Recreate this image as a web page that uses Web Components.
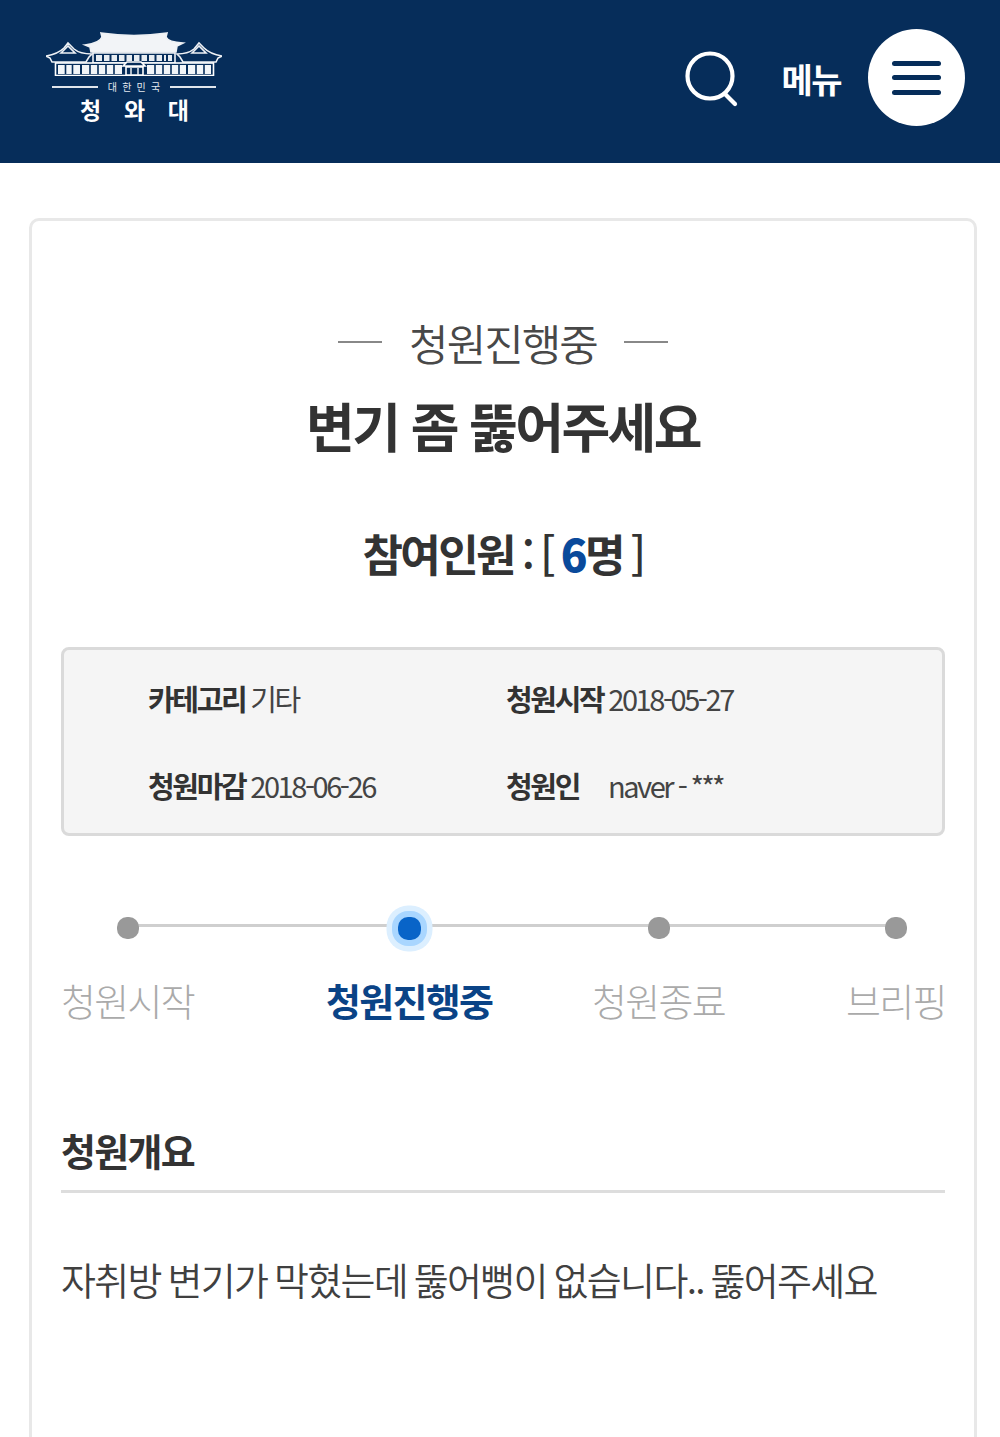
<!DOCTYPE html>
<html lang="ko">
<head>
<meta charset="utf-8">
<title>청와대</title>
<style>
  html, body { margin: 0; padding: 0; background: #fff; }
  body { font-family: "Noto Sans CJK KR", "Noto Sans", sans-serif; height: 1437px; overflow: hidden; }
</style>
</head>
<body>
<site-header></site-header>
<petition-card>
  <petition-title status="청원진행중" title="변기 좀 뚫어주세요" count="6"></petition-title>
  <petition-info></petition-info>
  <petition-steps></petition-steps>
  <petition-body heading="청원개요">자취방 변기가 막혔는데 뚫어뻥이 없습니다.. 뚫어주세요</petition-body>
</petition-card>

<script>
class SiteHeader extends HTMLElement {
  constructor () {
    super()
    this.shadowDOM = this.attachShadow({ mode: 'open' })
    this.shadowDOM.innerHTML = `
      <style>
        :host {
          display: flex;
          align-items: flex-start;
          justify-content: space-between;
          height: 163px;
          background: #062d5a;
          color: #fff;
          padding: 29px 35px 0 46px;
          box-sizing: border-box;
        }
        .logo { display: flex; flex-direction: column; width: 176px; margin-top: 3px; }
        .logo svg { display: block; }
        .nation { display: flex; align-items: center; justify-content: space-between; height: 14px; margin-top: 4px; padding: 0 6px; font-size: 10px; line-height: 14px; white-space: nowrap; color: #e4e9ef; }
        .nation span { letter-spacing: 5.2px; margin-right: -5.2px; }
        .nation i { width: 46px; height: 1.5px; background: #dfe5ec; }
        .name { display: flex; justify-content: space-between; padding: 0 33px 0 34px; font-size: 23px; font-weight: 700; line-height: 28px; margin-top: 1px; }
        .right { display: flex; align-items: center; }
        .search { display: block; margin-right: 42px; margin-top: 4px; }
        .label { font-size: 34px; font-weight: 700; letter-spacing: -1.5px; line-height: 40px; margin-right: 27px; margin-top: 3px; }
        .burger { width: 97px; height: 97px; border-radius: 50%; background: #fff; display: flex; flex-direction: column; align-items: center; justify-content: center; gap: 9.5px; }
        .burger i { display: block; width: 49px; height: 5px; border-radius: 3px; background: #062d5a; }
      </style>
      <div class="logo">
        <svg width="176" height="44" viewBox="0 0 176 44" fill="none" stroke="#eef1f5" stroke-width="1.6">
          <path d="M55 1 Q88 6 121 1 L120 5 Q122 10 137 11 L131 14 L130 20 H45 L44 15 L39 13 Q54 11 56 5 Z" fill="#f2f4f7"/>
          <path d="M47 21 H129 V31 H47 Z"/>
          <path d="M50 23 H126 V29 H50 Z" fill="#e8edf2" stroke="none"/>
          <path d="M57 23 V29 M64.500 23 V29 M72 23 V29 M79.500 23 V29 M87 23 V29 M94.500 23 V29 M102 23 V29 M109.500 23 V29 M117 23 V29 M121 23 V29" stroke="#062d5a" stroke-width="2"/>
          <path d="M0 24 Q12 22 18 16 L22 11 L28 17 Q34 22 46 22 L43 25 L40 30 H6 L4 26 Z" fill="#062d5a"/>
          <path d="M15 21 L22 14 L29 21 Z"/>
          <path d="M176 24 Q164 22 158 16 L153 11 L148 17 Q142 22 131 22 L134 25 L137 30 H170 L172 26 Z" fill="#062d5a"/>
          <path d="M146 21 L153 14 L160 21 Z"/>
          <rect x="9.500" y="31" width="158" height="12.500" fill="#062d5a" stroke="#fff"/>
          <rect x="12" y="33" width="22" height="9" fill="#f2f5f8" stroke="none"/>
          <rect x="36" y="33" width="40" height="9" fill="#f2f5f8" stroke="none"/>
          <rect x="101" y="33" width="39" height="9" fill="#f2f5f8" stroke="none"/>
          <rect x="142" y="33" width="23" height="9" fill="#f2f5f8" stroke="none"/>
          <path d="M19.500 33 V42 M26.500 33 V42 M44 33 V42 M52 33 V42 M60 33 V42 M68 33 V42 M109 33 V42 M117 33 V42 M125 33 V42 M133 33 V42 M150 33 V42 M158 33 V42" stroke="#062d5a" stroke-width="1.6"/>
          <path d="M80 35 H97 V43 H80 Z M77 34 L81 30 H95 L99 34 Z" fill="#062d5a" stroke="#fff"/>
          <path d="M85 36 V43 M92 36 V43" stroke="#e8edf2" stroke-width="1.5"/>
        </svg>
        <div class="nation"><i></i><span>대한민국</span><i></i></div>
        <div class="name"><span>청</span><span>와</span><span>대</span></div>
      </div>
      <div class="right">
        <svg class="search" width="54" height="58" viewBox="0 0 54 58" fill="none" stroke="#fff" stroke-width="4.200" stroke-linecap="round">
          <circle cx="25" cy="25" r="22.500"/>
          <path d="M40 43 L50 53"/>
        </svg>
        <span class="label">메뉴</span>
        <div class="burger"><i></i><i></i><i></i></div>
      </div>
    `
  }
}

class PetitionCard extends HTMLElement {
  constructor () {
    super()
    this.shadowDOM = this.attachShadow({ mode: 'open' })
    this.shadowDOM.innerHTML = `
      <style>
        :host {
          display: block;
          margin: 55px 23px 0 29px;
          height: 1300px;
          border: 3px solid #e8e8e8;
          border-radius: 10px;
          padding: 0 29px;
          box-sizing: border-box;
        }
      </style>
      <slot></slot>
    `
  }
}

class PetitionTitle extends HTMLElement {
  constructor () {
    super()
    this.shadowDOM = this.attachShadow({ mode: 'open' })
  }

  connectedCallback () {
    this.shadowDOM.innerHTML = `
      <style>
        :host { display: block; text-align: center; color: #333; }
        .status { display: flex; justify-content: center; align-items: center; gap: 27px; padding-top: 93px; height: 56px; font-size: 43px; font-weight: 350; letter-spacing: -2px; color: #484848; line-height: 56px; }
        .status i { width: 44px; height: 2px; background: #888; }
        h2 { margin: 20px 0 0; font-size: 53px; font-weight: 700; letter-spacing: -2.6px; line-height: 70px; }
        .count { margin-top: 63px; font-size: 44px; font-weight: 700; letter-spacing: -2.6px; word-spacing: -2px; line-height: 60px; }
        .count b { color: #0a4a9b; }
        .count span { font-weight: 500; }
      </style>
      <div class="status"><i></i><span>${this.getAttribute('status')}</span><i></i></div>
      <h2>${this.getAttribute('title')}</h2>
      <div class="count">참여인원 <span>:</span> <span>[</span> <b>${this.getAttribute('count')}</b>명 <span>]</span></div>
    `
  }
}

class PetitionInfo extends HTMLElement {
  constructor () {
    super()
    this.shadowDOM = this.attachShadow({ mode: 'open' })
    this.shadowDOM.innerHTML = `
      <style>
        :host {
          display: grid;
          grid-template-columns: 358px 1fr;
          grid-auto-rows: 87px;
          align-items: center;
          margin-top: 64px;
          height: 189px;
          padding: 4px 0 0 84px;
          box-sizing: border-box;
          background: #f5f5f5;
          border: 3px solid #dadada;
          border-radius: 8px;
          font-size: 29px;
          letter-spacing: -2.45px;
          color: #444;
        }
        div { display: flex; align-items: center; white-space: nowrap; }
        b { font-weight: 700; color: #333; margin-right: 5px; letter-spacing: -2.35px; }
        .gap { margin-right: 29px; }
        .stars { margin-left: 5px; letter-spacing: -2.8px; }
      </style>
      <div><b>카테고리</b>기타</div>
      <div><b>청원시작</b>2018-05-27</div>
      <div><b>청원마감</b>2018-06-26</div>
      <div><b class="gap">청원인</b>naver -<span class="stars">***</span></div>
    `
  }
}

class PetitionSteps extends HTMLElement {
  constructor () {
    super()
    this.shadowDOM = this.attachShadow({ mode: 'open' })
    const steps = ['청원시작', '청원진행중', '청원종료', '브리핑']
    this.shadowDOM.innerHTML = `
      <style>
        :host { display: grid; grid-template-columns: 265px 266px 254px auto; justify-items: start; position: relative; margin-top: 70px; }
        .line { position: absolute; left: 66px; right: 50px; top: 18px; height: 3px; background: #cfcfcf; }
        .step { position: relative; display: flex; flex-direction: column; align-items: center; font-size: 38px; font-weight: 300; letter-spacing: -1.7px; line-height: 50px; color: #aaa; white-space: nowrap; }
        .dot { width: 22px; height: 22px; border-radius: 10px; background: #999; margin: 11px 0 36px; }
        .on { color: #0a4386; font-weight: 700; }
        .on .dot { background: #0864c8; width: 23px; height: 23px; margin: 10.5px 0 35.5px; box-shadow: 0 0 0 6px #a9d6ff, 0 0 0 11.5px #dcefff; }
      </style>
      <div class="line"></div>
      ${steps.map((s, i) => `<div class="step${i === 1 ? ' on' : ''}"><span class="dot"></span>${s}</div>`).join('')}
    `
  }
}

class PetitionBody extends HTMLElement {
  constructor () {
    super()
    this.shadowDOM = this.attachShadow({ mode: 'open' })
  }

  connectedCallback () {
    this.shadowDOM.innerHTML = `
      <style>
        :host { display: block; margin-top: 100px; }
        h3 { margin: 0; padding-bottom: 15px; border-bottom: 3px solid #ddd; font-size: 38px; font-weight: 700; letter-spacing: -1.7px; line-height: 50px; color: #333; }
        p { margin: 56px 0 0; font-size: 38px; font-weight: 350; letter-spacing: -1.7px; word-spacing: -2.2px; line-height: 60px; color: #404040; white-space: nowrap; }
      </style>
      <h3>${this.getAttribute('heading')}</h3>
      <p><slot></slot></p>
    `
  }
}

customElements.define('site-header', SiteHeader)
customElements.define('petition-card', PetitionCard)
customElements.define('petition-title', PetitionTitle)
customElements.define('petition-info', PetitionInfo)
customElements.define('petition-steps', PetitionSteps)
customElements.define('petition-body', PetitionBody)
</script>
</body>
</html>
